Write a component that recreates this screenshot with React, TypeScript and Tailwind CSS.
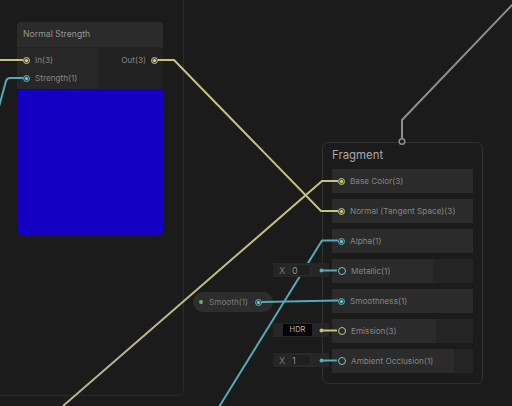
import React from "react";

type C = "y" | "c";

function Port({ c }: { c: C }) {
  return (
    <span
      className={
        c === "y"
          ? "w-[7px] h-[7px] shrink-0 rounded-full border-[1.5px] border-[#c6c47e] bg-[#4a4a30] flex items-center justify-center"
          : "w-[7px] h-[7px] shrink-0 rounded-full border-[1.5px] border-[#5bb0ba] bg-[#2a4a4e] flex items-center justify-center"
      }
    >
      <span
        className={
          c === "y"
            ? "w-[3px] h-[3px] rounded-full bg-[#d6d494]"
            : "w-[3px] h-[3px] rounded-full bg-[#7cc8d0]"
        }
      />
    </span>
  );
}

function Ring({ c }: { c: C }) {
  return (
    <span
      className={
        c === "y"
          ? "w-[8px] h-[8px] shrink-0 rounded-full border-[1.5px] border-[#c6c48a] bg-[#2b2b2b]"
          : "w-[8px] h-[8px] shrink-0 rounded-full border-[1.5px] border-[#7cc0c8] bg-[#2b2b2b]"
      }
    />
  );
}

function Row({
  label,
  c,
  hollow,
  w,
}: {
  label: string;
  c: C;
  hollow?: boolean;
  w?: string;
}) {
  return (
    <div className="h-[24px] flex bg-[#242424]">
      <div
        className={
          "h-full flex items-center pl-[6px] gap-[5px] bg-[#2b2b2b] text-[8.2px] text-[#858585] whitespace-nowrap " +
          (w ?? "w-full")
        }
      >
        {hollow ? <Ring c={c} /> : <Port c={c} />}
        <span>{label}</span>
      </div>
    </div>
  );
}

function XField({ top, value }: { top: string; value: string }) {
  return (
    <div className={"absolute left-[273px] w-[56px] h-[14px] bg-[#262626] flex items-center pl-[4px] " + top}>
      <span className="w-[10px] text-center text-[9px] text-[#767676] leading-none">X</span>
      <div className="ml-[3px] w-[21px] h-[12px] bg-[#1f1f1f] border border-[#2c2c2c] rounded-[2px] flex items-center pl-[1px] text-[9px] text-[#959595] leading-none">
        {value}
      </div>
    </div>
  );
}

export default function App() {
  return (
    <div className="relative w-[512px] h-[406px] overflow-hidden bg-[#1b1b1b] font-[Inter,sans-serif]">
      {/* group frame */}
      <div className="absolute left-[-20px] top-[-20px] w-[204px] h-[416px] rounded-[6px] border border-[#2a2a2a]" />

      {/* Normal Strength node */}
      <div className="absolute left-[17px] top-[22px] w-[146px] flex flex-col rounded-[4px] overflow-hidden">
        <div className="h-[26px] flex items-center px-[6px] bg-[#2b2b2b] text-[8.7px] text-[#959595] border-b border-[#232323]">
          Normal Strength
        </div>
        <div className="h-[41px] flex">
          <div className="w-[82px] bg-[#272727] pt-[3px] flex flex-col text-[8.2px] text-[#858585]">
            <div className="h-[18px] flex items-center pl-[6px] gap-[5px]">
              <Port c="y" />
              <span>In(3)</span>
            </div>
            <div className="h-[18px] flex items-center pl-[6px] gap-[5px]">
              <Port c="c" />
              <span>Strength(1)</span>
            </div>
          </div>
          <div className="flex-1 bg-[#212121] pt-[3px] text-[8.2px] text-[#858585]">
            <div className="h-[18px] flex items-center justify-end pr-[5px] gap-[5px]">
              <span>Out(3)</span>
              <Port c="y" />
            </div>
          </div>
        </div>
        <div className="h-[146px] bg-[#1400c2] rounded-b-[4px]" />
      </div>

      {/* Fragment node */}
      <div className="absolute left-[322px] top-[142px] w-[161px] h-[242px] rounded-[6px] border border-[#303030] px-[9px]">
        <div className="h-[26px] flex items-center text-[11.4px] text-[#a8a8a8]">Fragment</div>
        <div className="flex flex-col gap-[6px]">
          <Row label="Base Color(3)" c="y" />
          <Row label="Normal (Tangent Space)(3)" c="y" />
          <Row label="Alpha(1)" c="c" />
          <Row label="Metallic(1)" c="c" hollow w="w-[101px]" />
          <Row label="Smoothness(1)" c="c" />
          <Row label="Emission(3)" c="y" hollow w="w-[104px]" />
          <Row label="Ambient Occlusion(1)" c="c" hollow w="w-[122px]" />
        </div>
      </div>

      {/* Smooth property pill */}
      <div className="absolute left-[193px] top-[292px] w-[80px] h-[20px] rounded-full bg-[#2d2d2d] flex items-center pl-[6px] pr-[11px] gap-[6px] text-[8.2px] text-[#7c7c7c]">
        <span className="w-[4px] h-[4px] shrink-0 rounded-full bg-[#62b85a]" />
        <span className="whitespace-nowrap">Smooth(1)</span>
        <span className="ml-auto flex">
          <Port c="c" />
        </span>
      </div>

      {/* wires */}
      <svg className="absolute inset-0" width="512" height="406" fill="none">
        <defs>
          <linearGradient id="bc" gradientUnits="userSpaceOnUse" x1="63" y1="406" x2="322" y2="181">
            <stop offset="0" stopColor="#b5ad95" />
            <stop offset="1" stopColor="#c4c27e" />
          </linearGradient>
        </defs>
        <path d="M -2 60 L 23 60" stroke="#c4c27e" strokeWidth="2" />
        <path d="M -3 114 L 6 81 Q 7 78 10 78 L 23 78" stroke="#56aab6" strokeWidth="2" />
        <path d="M 158 60 L 174 60 L 321 211 L 338 211" stroke="#c4c27e" strokeWidth="2" strokeLinejoin="round" />
        <path d="M 63 406 L 322 181 L 338 181" stroke="url(#bc)" strokeWidth="2" strokeLinejoin="round" />
        <path d="M 219 407 L 322 240.5 L 338 240.5" stroke="#56aab6" strokeWidth="2" strokeLinejoin="round" />
        <path d="M 262 302 L 338 300.5" stroke="#56aab6" strokeWidth="2" />
        <path d="M 514 3 L 402 120 L 402 139" stroke="#8e8e8e" strokeWidth="2" strokeLinejoin="round" />
        <circle cx="402" cy="141.5" r="2.8" stroke="#8e8e8e" strokeWidth="1.5" fill="#1b1b1b" />
      </svg>

      {/* inline inputs */}
      <XField top="top-[263px]" value="0" />
      <div className="absolute left-[273px] top-[323px] w-[56px] h-[14px] bg-[#262626] flex items-center pl-[10px]">
        <div className="w-[29px] h-[12px] bg-[#050505] flex items-center justify-center text-[7.5px] text-[#b0b0b0] leading-none">
          HDR
        </div>
      </div>
      <XField top="top-[353px]" value="1" />

      {/* stubs */}
      <svg className="absolute inset-0" width="512" height="406" fill="none">
        <circle cx="321.5" cy="270.5" r="2" fill="#56aab6" />
        <path d="M 323 270.5 L 337 270.5" stroke="#56aab6" strokeWidth="2" />
        <circle cx="321.5" cy="330.5" r="2" fill="#c4c27e" />
        <path d="M 323 330.5 L 337 330.5" stroke="#c4c27e" strokeWidth="2" />
        <circle cx="321.5" cy="360.5" r="2" fill="#56aab6" />
        <path d="M 323 360.5 L 337 360.5" stroke="#56aab6" strokeWidth="2" />
      </svg>
    </div>
  );
}
